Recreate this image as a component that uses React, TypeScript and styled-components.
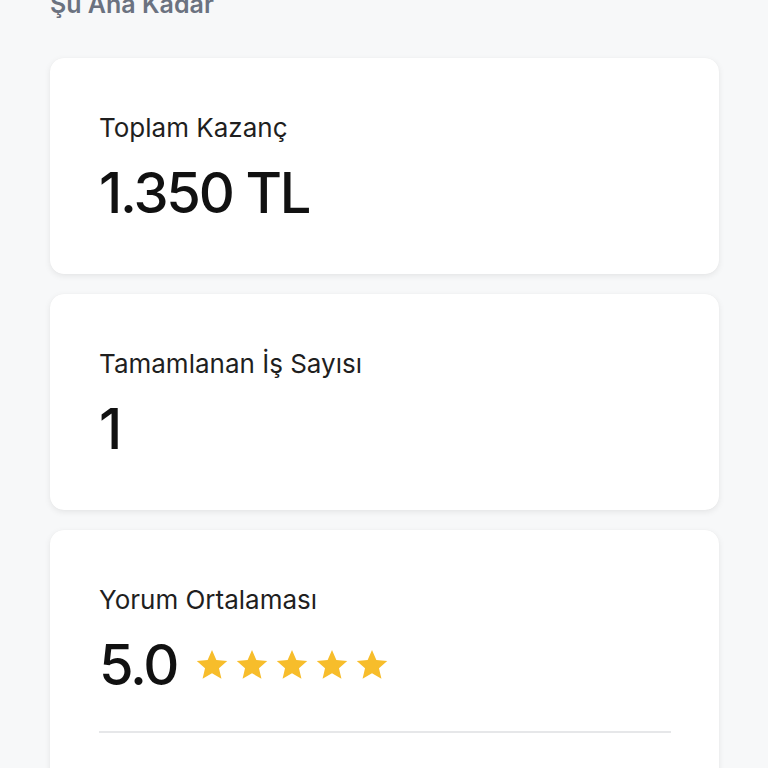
import styled, { createGlobalStyle } from "styled-components";

const GlobalStyle = createGlobalStyle`
  html, body {
    margin: 0;
    padding: 0;
    background: #f7f8f9;
    font-family: Inter, "Noto Sans", sans-serif;
  }
`;

const Star = () => (
  <svg width="38" height="38" viewBox="0 0 24 24">
    <path
      d="M12 2.6l2.75 6.3 6.85.6-5.2 4.5 1.56 6.7L12 17.2l-5.96 3.5 1.56-6.7-5.2-4.5 6.85-.6z"
      fill="#f7bd2b"
    />
  </svg>
);

const App = () => {
  return (
    <>
      <GlobalStyle />
      <Page>
        <Heading>Şu Ana Kadar</Heading>
        <Card>
          <Label>Toplam Kazanç</Label>
          <Value>1.350 TL</Value>
        </Card>
        <Card>
          <Label>Tamamlanan İş Sayısı</Label>
          <Value>1</Value>
        </Card>
        <Card>
          <Label>Yorum Ortalaması</Label>
          <RatingRow>
            <Value>5.0</Value>
            <Stars>
              {[0, 1, 2, 3, 4].map((i) => (
                <Star key={i} />
              ))}
            </Stars>
          </RatingRow>
          <Divider />
          <Footer />
        </Card>
      </Page>
    </>
  );
};

const Page = styled.div`
  display: flex;
  flex-direction: column;
  gap: 20px;
  padding: 0 49px 40px 50px;
`;

const Heading = styled.h2`
  margin: -12px 0 18px;
  font-size: 25px;
  line-height: 32px;
  font-weight: 600;
  color: #6b7280;
`;

const Card = styled.div`
  background: #fff;
  border-radius: 14px;
  box-shadow: 0 2px 6px rgba(0, 0, 0, 0.08), 0 0 1px rgba(0, 0, 0, 0.06);
  padding: 53px 48px 50px 49px;
  display: flex;
  flex-direction: column;
`;

const Label = styled.div`
  font-size: 26px;
  line-height: 34px;
  color: #1f1f1f;
  font-weight: 400;
`;

const Value = styled.div`
  margin-top: 17px;
  font-size: 56px;
  line-height: 62px;
  font-weight: 550;
  letter-spacing: -2.2px;
  color: #111;
`;

const RatingRow = styled.div`
  display: flex;
  align-items: center;
  gap: 16px;
`;

const Stars = styled.div`
  display: flex;
  gap: 2px;
  margin-top: 17px;
`;

const Divider = styled.div`
  height: 2px;
  background: #e6e7e9;
  margin: 35px 0 0;
`;

const Footer = styled.div`
  height: 60px;
`;

export default App;
